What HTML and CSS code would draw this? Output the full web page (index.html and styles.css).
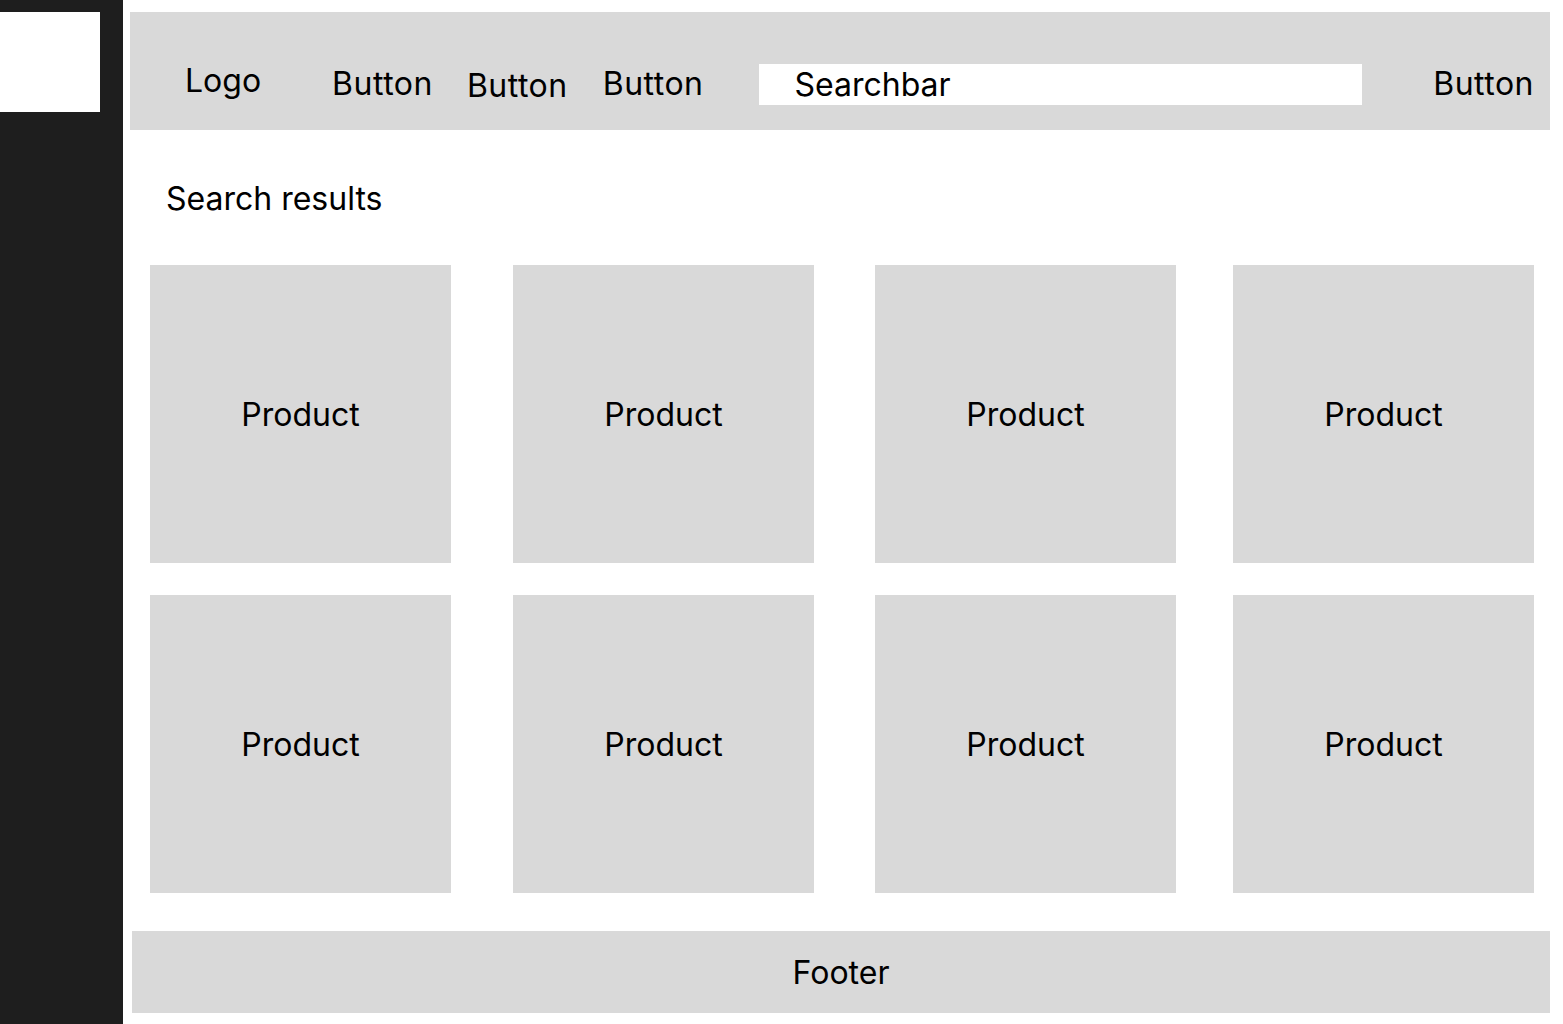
FILE: index.html
```html
<!DOCTYPE html>
<html lang="en">
<head>
<meta charset="utf-8">
<title>Search results</title>
<link rel="stylesheet" href="styles.css">
</head>
<body>
<div class="page">
  <aside class="sidebar">
    <div class="sidebar-box"></div>
  </aside>
  <main class="main">
    <header class="header">
      <div class="logo">Logo</div>
      <div class="nav-btn nav-btn-1">Button</div>
      <div class="nav-btn nav-btn-2">Button</div>
      <div class="nav-btn nav-btn-3">Button</div>
      <div class="searchbar">Searchbar</div>
      <div class="nav-btn nav-btn-right">Button</div>
    </header>
    <h1 class="title">Search results</h1>
    <section class="grid">
      <div class="cell"><div class="product">Product</div></div>
      <div class="cell"><div class="product">Product</div></div>
      <div class="cell"><div class="product">Product</div></div>
      <div class="cell"><div class="product">Product</div></div>
      <div class="cell"><div class="product">Product</div></div>
      <div class="cell"><div class="product">Product</div></div>
      <div class="cell"><div class="product">Product</div></div>
      <div class="cell"><div class="product">Product</div></div>
    </section>
    <footer class="footer">Footer</footer>
  </main>
</div>
</body>
</html>
```

FILE: styles.css
```css
html, body {
  margin: 0;
  padding: 0;
  background: #ffffff;
}

body {
  font-family: Inter, "Noto Sans", "Liberation Sans", sans-serif;
  font-size: 32px;
  color: #000000;
  width: 1563px;
  height: 1024px;
  overflow: hidden;
}

.page {
  display: flex;
  height: 1024px;
}

.sidebar {
  width: 123px;
  flex: 0 0 123px;
  background: #1e1e1e;
  padding-top: 12px;
  box-sizing: border-box;
}

.sidebar-box {
  width: 100px;
  height: 100px;
  background: #ffffff;
}

.main {
  flex: 1;
  display: flex;
  flex-direction: column;
  padding-left: 7px;
  padding-top: 12px;
}

.header {
  width: 1420px;
  height: 118px;
  box-sizing: border-box;
  background: #d9d9d9;
  display: flex;
  align-items: flex-start;
  padding: 53px 16px 0 55px;
  line-height: 38px;
}

.logo {
  margin-top: -3px;
  margin-right: 71px;
}

.nav-btn {
  letter-spacing: 0.5px;
}

.nav-btn-1 {
  margin-right: 34px;
}

.nav-btn-2 {
  margin-top: 2px;
  margin-right: 35px;
}

.nav-btn-3 {
  margin-right: 56px;
}

.searchbar {
  width: 603px;
  height: 41px;
  margin-top: -1px;
  box-sizing: border-box;
  background: #ffffff;
  padding-left: 35px;
  line-height: 42px;
}

.nav-btn-right {
  margin-left: auto;
}

.title {
  margin: 50px 0 0 36px;
  font-size: 32px;
  font-weight: 400;
  line-height: 38px;
}

.grid {
  margin: 47px 0 0 20px;
  display: grid;
  grid-template-columns: 363px 362px 358px 301px;
  grid-auto-rows: 298px;
  row-gap: 32px;
}

.cell {
  display: flex;
}

.product {
  width: 301px;
  background: #d9d9d9;
  display: flex;
  align-items: center;
  justify-content: center;
}

.footer {
  margin: 38px 0 0 2px;
  width: 1418px;
  height: 82px;
  background: #d9d9d9;
  display: flex;
  align-items: center;
  justify-content: center;
}
```
